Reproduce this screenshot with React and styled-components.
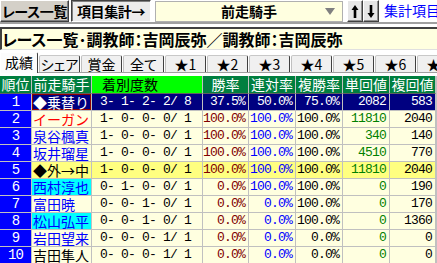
import React from 'react';
import styled, { createGlobalStyle, css } from 'styled-components';

const GlobalStyle = createGlobalStyle`
  html, body { margin: 0; padding: 0; background: #fff; }
  body {
    font-family: "Noto Sans CJK JP", sans-serif;
    font-size: 14px;
    color: #000;
    overflow: hidden;
  }
`;

const Page = styled.div`
  width: 437px;
  height: 263px;
  overflow: hidden;
  display: flex;
  flex-direction: column;
`;

const Toolbar = styled.div`
  display: flex;
  align-items: flex-start;
  height: 22px;
  flex-shrink: 0;
  white-space: nowrap;
`;

const ToolButton = styled.div`
  box-sizing: border-box;
  flex-shrink: 0;
  height: 22px;
  width: ${(p) => p.$w}px;
  margin-right: ${(p) => p.$mr || 0}px;
  display: flex;
  align-items: center;
  justify-content: center;
  font-weight: bold;
  font-size: 14px;
  line-height: 20px;
  letter-spacing: -0.4px;
  white-space: nowrap;
  overflow: hidden;
  font-feature-settings: "palt";
  border: 1px solid;
  ${(p) =>
    p.$pressed
      ? css`
          background: #ececec;
          border-color: #404040 #ffffff #ffffff #404040;
          box-shadow: inset 1px 1px 0 #808080;
        `
      : css`
          background: #d4d0c8;
          border-color: #ffffff #404040 #404040 #ffffff;
          box-shadow: inset -1px -1px 0 #808080;
        `}
`;

const Combo = styled.div`
  box-sizing: border-box;
  flex-shrink: 0;
  position: relative;
  width: 188px;
  height: 21px;
  margin-top: 1px;
  margin-right: 4px;
  background: #ffffe0;
  border: 1px solid #b0b0b0;
  display: flex;
  align-items: center;
  justify-content: center;
  font-weight: bold;
  font-size: 14px;
  line-height: 19px;
`;

const ComboArrow = styled.span`
  position: absolute;
  right: 7px;
  top: 6px;
  width: 0;
  height: 0;
  border-left: 5px solid transparent;
  border-right: 5px solid transparent;
  border-top: 7px solid #808080;
`;

const ArrowButton = styled.div`
  box-sizing: border-box;
  flex-shrink: 0;
  width: 16px;
  height: 22px;
  background: #e6e6e6;
  border: 1px solid;
  border-color: #ffffff #404040 #404040 #ffffff;
  box-shadow: inset -1px -1px 0 #909090;
  display: flex;
  align-items: center;
  justify-content: center;
`;

const LinkText = styled.div`
  margin-left: 5px;
  height: 22px;
  line-height: 20px;
  color: #0000ff;
  font-size: 14px;
  white-space: nowrap;
`;

const Separator = styled.div`
  height: 2px;
  background: #a0a0a0;
  border-bottom: 3px solid #ffffff;
  flex-shrink: 0;
`;

const TitleBox = styled.div`
  box-sizing: border-box;
  height: 23px;
  background: #ffffe0;
  border-top: 2px solid #404040;
  border-left: 2px solid #404040;
  border-bottom: 1px solid #e0e0e0;
  font-weight: bold;
  font-size: 16px;
  line-height: 20px;
  white-space: nowrap;
  font-feature-settings: "palt";
  flex-shrink: 0;
`;

const TabBar = styled.div`
  display: flex;
  align-items: flex-end;
  height: 21px;
  margin-top: 1px;
  border-bottom: 1px solid #a0a0a0;
  flex-shrink: 0;
  white-space: nowrap;
`;

const Tab = styled.div`
  box-sizing: border-box;
  flex-shrink: 0;
  width: ${(p) => p.$w}px;
  display: flex;
  align-items: center;
  justify-content: center;
  font-size: 14px;
  line-height: 16px;
  font-feature-settings: "palt";
  border-top: 1px solid #c8c8c8;
  border-left: 1px solid #c0c0c0;
  border-right: 1px solid #404040;
  border-radius: 2px 2px 0 0;
  ${(p) =>
    p.$active
      ? css`
          height: 21px;
          background: #fcfcfc;
          margin-bottom: -1px;
          border-left-color: #ffffff;
          border-top-color: #ffffff;
          padding-bottom: 2px;
        `
      : css`
          height: 17px;
          background: #f0f0f0;
          margin-left: 1px;
        `}
`;

const Grid = styled.div`
  margin-top: 3px;
  display: grid;
  grid-template-columns: 32px 60px 111px 46px 47px 47px 47px 46px;
  grid-auto-rows: 17px;
  grid-template-rows: 18px;
  width: 436px;
  border-right: 1px solid #c0c0c0;
`;

const HeadCell = styled.div`
  box-sizing: border-box;
  background: ${(p) => (p.$lime ? '#00ff00' : '#007f3f')};
  color: ${(p) => (p.$lime ? '#000' : '#fff')};
  border-right: 1px solid #c0c0c0;
  border-bottom: 1px solid #606060;
  font-size: 14px;
  line-height: 17px;
  text-align: ${(p) => (p.$left ? 'left' : 'center')};
  padding-left: ${(p) => (p.$left ? 10 : 0)}px;
  white-space: nowrap;
  overflow: hidden;
`;

const Cell = styled.div`
  box-sizing: border-box;
  background: ${(p) => p.$bg};
  color: ${(p) => p.$color};
  border-right: 1px solid #c0c0c0;
  border-bottom: 1px solid #c0c0c0;
  line-height: 16px;
  white-space: pre;
  overflow: hidden;
  text-align: ${(p) => p.$align || 'right'};
  padding: ${(p) => (p.$align === 'right' || !p.$align ? '0 3px 0 0' : '0 0 0 1px')};
  ${(p) =>
    p.$mono
      ? css`
          font-family: "Liberation Mono", monospace;
          font-size: 13px;
          letter-spacing: -0.8px;
        `
      : css`
          font-family: "Noto Sans CJK JP", sans-serif;
          font-size: 14px;
        `}
  ${(p) =>
    p.$focus &&
    css`
      box-shadow: inset 0 0 0 1px #900000;
    `}
`;

const RankCell = styled(Cell)`
  background: #0000ff;
  color: #fff;
  text-align: center;
  padding: 0;
  font-size: 14px;
`;

const tabs = ['シェア', '賞金', '全て', '★1', '★2', '★3', '★4', '★5', '★6', '★7'];

const rows = [
  { name: '◆乗替り', nameColor: '#fff', counts: '3- 1- 2- 2/ 8', win: '37.5%', ren: '50.0%', fuku: '75.0%', tan: '2082', fk: '583', selected: true },
  { name: 'イーガン', nameColor: '#ff0000', counts: '1- 0- 0- 0/ 1', win: '100.0%', ren: '100.0%', fuku: '100.0%', tan: '11810', fk: '2040' },
  { name: '泉谷楓真', nameColor: '#0000ff', counts: '1- 0- 0- 0/ 1', win: '100.0%', ren: '100.0%', fuku: '100.0%', tan: '340', fk: '140' },
  { name: '坂井瑠星', nameColor: '#0000ff', counts: '1- 0- 0- 0/ 1', win: '100.0%', ren: '100.0%', fuku: '100.0%', tan: '4510', fk: '770' },
  { name: '◆外→中', nameColor: '#000', counts: '1- 0- 0- 0/ 1', win: '100.0%', ren: '100.0%', fuku: '100.0%', tan: '11810', fk: '2040', hl: true },
  { name: '西村淳也', nameColor: '#0000ff', nameBg: '#00ffff', counts: '0- 1- 0- 0/ 1', win: '0.0%', ren: '100.0%', fuku: '100.0%', tan: '0', fk: '190' },
  { name: '富田暁', nameColor: '#0000ff', counts: '0- 0- 1- 0/ 1', win: '0.0%', ren: '0.0%', fuku: '100.0%', tan: '0', fk: '170' },
  { name: '松山弘平', nameColor: '#0000ff', nameBg: '#00ffff', counts: '0- 0- 1- 0/ 1', win: '0.0%', ren: '0.0%', fuku: '100.0%', tan: '0', fk: '1360' },
  { name: '岩田望来', nameColor: '#0000ff', counts: '0- 0- 0- 1/ 1', win: '0.0%', ren: '0.0%', fuku: '0.0%', tan: '0', fk: '0' },
  { name: '吉田隼人', nameColor: '#000', counts: '0- 0- 0- 1/ 1', win: '0.0%', ren: '0.0%', fuku: '0.0%', tan: '0', fk: '0' },
];

export default function App() {
  return (
    <Page>
      <GlobalStyle />
      <Toolbar>
        <ToolButton $w={69} $mr={2}>レース一覧</ToolButton>
        <ToolButton $w={80} $mr={4} $pressed>項目集計→</ToolButton>
        <Combo>
          前走騎手
          <ComboArrow />
        </Combo>
        <ArrowButton>
          <svg width="8" height="15" viewBox="0 0 8 15">
            <path d="M4 1 L7.5 6 L5.3 6 L5.3 14 L2.7 14 L2.7 6 L0.5 6 Z" fill="#000" />
          </svg>
        </ArrowButton>
        <ArrowButton>
          <svg width="8" height="15" viewBox="0 0 8 15">
            <path d="M4 14 L7.5 9 L5.3 9 L5.3 1 L2.7 1 L2.7 9 L0.5 9 Z" fill="#000" />
          </svg>
        </ArrowButton>
        <LinkText>集計項目メニュー</LinkText>
      </Toolbar>
      <Separator />
      <TitleBox>レース一覧･調教師：吉岡辰弥／調教師：吉岡辰弥</TitleBox>
      <TabBar>
        <Tab $w={38} $active>成績</Tab>
        {tabs.map((t) => (
          <Tab key={t} $w={41}>{t}</Tab>
        ))}
      </TabBar>
      <Grid>
        <HeadCell>順位</HeadCell>
        <HeadCell>前走騎手</HeadCell>
        <HeadCell $lime $left>着別度数</HeadCell>
        <HeadCell>勝率</HeadCell>
        <HeadCell>連対率</HeadCell>
        <HeadCell>複勝率</HeadCell>
        <HeadCell>単回値</HeadCell>
        <HeadCell>複回値</HeadCell>
        {rows.map((r, i) => {
          const bg = r.selected ? '#000080' : r.hl ? '#ffff80' : '#ffffe0';
          const c = (col) => (r.selected ? '#fff' : col);
          return (
            <React.Fragment key={i}>
              <RankCell $mono>{String(i + 1)}</RankCell>
              <Cell $bg={r.nameBg && !r.selected ? r.nameBg : bg} $color={r.nameColor} $align="left" $focus={r.selected}>
                {r.name}
              </Cell>
              <Cell $mono $bg={bg} $color={c('#000')} $align="left">{' ' + r.counts}</Cell>
              <Cell $mono $bg={bg} $color={c('#800000')}>{r.win}</Cell>
              <Cell $mono $bg={bg} $color={c('#0000ff')}>{r.ren}</Cell>
              <Cell $mono $bg={bg} $color={c('#000')}>{r.fuku}</Cell>
              <Cell $mono $bg={bg} $color={c('#008000')}>{r.tan}</Cell>
              <Cell $mono $bg={bg} $color={c('#000')}>{r.fk}</Cell>
            </React.Fragment>
          );
        })}
      </Grid>
    </Page>
  );
}
